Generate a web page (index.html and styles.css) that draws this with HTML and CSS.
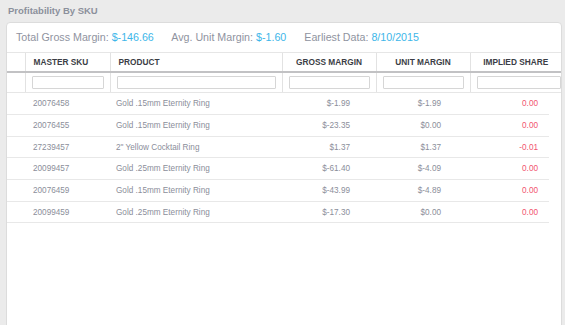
FILE: index.html
```html
<!DOCTYPE html>
<html lang="en">
<head>
  <meta charset="UTF-8" />
  <title>Profitability By SKU</title>
  <link rel="stylesheet" href="styles.css">
</head>
<body>
  <div class="page">
    <h1 class="title">Profitability By SKU</h1>

    <div class="panel">
      <div class="summary">
        <span class="stat">Total Gross Margin: <b>$-146.66</b></span>
        <span class="stat">Avg. Unit Margin: <b>$-1.60</b></span>
        <span class="stat">Earliest Data: <b>8/10/2015</b></span>
      </div>

      <!-- HEADER + FILTERS -->
      <table class="grid grid-head">
        <colgroup>
          <col class="c-sel"><col class="c-sku"><col class="c-prod"><col class="c-gross"><col class="c-unit"><col>
        </colgroup>
        <thead>
          <tr class="head-row">
            <th></th>
            <th class="left">Master SKU</th>
            <th class="left">Product</th>
            <th>Gross Margin</th>
            <th>Unit Margin</th>
            <th>Implied Share</th>
          </tr>
          <tr class="filter-row">
            <td></td>
            <td><input type="text"></td>
            <td><input type="text"></td>
            <td><input type="text"></td>
            <td><input type="text"></td>
            <td><input type="text"></td>
          </tr>
        </thead>
      </table>

      <!-- ROWS -->
      <table class="grid grid-body">
        <colgroup>
          <col class="c-sel"><col class="c-sku"><col class="c-prod"><col class="c-gross"><col class="c-unit"><col>
        </colgroup>
        <tbody>
          <tr><td></td><td>20076458</td><td>Gold .15mm Eternity Ring</td><td class="gross">$-1.99</td><td class="unit">$-1.99</td><td class="share">0.00</td></tr>
          <tr><td></td><td>20076455</td><td>Gold .15mm Eternity Ring</td><td class="gross">$-23.35</td><td class="unit">$0.00</td><td class="share">0.00</td></tr>
          <tr><td></td><td>27239457</td><td>2" Yellow Cocktail Ring</td><td class="gross">$1.37</td><td class="unit">$1.37</td><td class="share">-0.01</td></tr>
          <tr><td></td><td>20099457</td><td>Gold .25mm Eternity Ring</td><td class="gross">$-61.40</td><td class="unit">$-4.09</td><td class="share">0.00</td></tr>
          <tr><td></td><td>20076459</td><td>Gold .15mm Eternity Ring</td><td class="gross">$-43.99</td><td class="unit">$-4.89</td><td class="share">0.00</td></tr>
          <tr><td></td><td>20099459</td><td>Gold .25mm Eternity Ring</td><td class="gross">$-17.30</td><td class="unit">$0.00</td><td class="share">0.00</td></tr>
        </tbody>
      </table>
    </div>
  </div>
</body>
</html>
```

FILE: styles.css
```css
/* ---------- BASE ---------- */
*{margin:0;padding:0;box-sizing:border-box;}
html,body{
  height:100%;
  background:#ebebeb;
  font-family:'Liberation Sans',Arial,sans-serif;
  color:#8b8e9a;
  overflow:hidden;
}
.page{padding:0 3px 0 6px;}

.title{
  font-size:9.5px;font-weight:bold;color:#8b909c;
  height:22px;line-height:21px;padding-left:2px;
}

/* ---------- PANEL ---------- */
.panel{
  background:#fff;
  border:1px solid #dcdcdc;
  border-radius:4px;
  height:320px;
}
.summary{
  height:29px;
  padding:8px 0 0 9px;
  font-size:10.7px;
  color:#8f93a0;
  white-space:nowrap;
}
.summary .stat{margin-right:15px;}
.summary b{font-weight:normal;color:#3db6e9;}

/* ---------- TABLE ---------- */
.grid{border-collapse:collapse;table-layout:fixed;}
.grid-head{width:100%;}
.grid-body{width:542px;}
.c-sel{width:18px;}
.c-sku{width:85px;}
.c-prod{width:172px;}
.c-gross{width:94px;}
.c-unit{width:94px;}

.head-row th{
  height:19px;
  border-top:1px solid #e6e6e6;
  border-left:1px solid #e2e2e2;
  border-bottom:2px solid #c2c2c4;
  font-size:8.3px;font-weight:bold;color:#3b3d45;
  text-transform:uppercase;text-align:center;
}
.head-row th:first-child{border-left:0;}
.head-row th.left{text-align:left;padding-left:8px;}

.filter-row td{
  height:21px;
  border-left:1px solid #e2e2e2;
  border-bottom:1px solid #e6e6e6;
  padding:0 6px;
}
.filter-row td:first-child{border-left:0;}
.filter-row input{
  display:block;width:100%;height:13px;
  border:1px solid #d6d6d6;border-radius:1px;
  background:#fff;
}
.filter-row td:last-child{padding-right:0;}

.grid-body td{
  height:21.67px;
  border-bottom:1px solid #e8e8e8;
  font-size:8.2px;color:#8b8e9a;
  padding-left:8px;
  white-space:nowrap;
}
.grid-body td:nth-child(3){padding-left:6px;}
.grid-body td.gross{text-align:right;padding-right:26px;}
.grid-body td.unit{text-align:right;padding-right:29px;}
.grid-body td.share{text-align:right;padding-right:11px;color:#f2546f;}
```
